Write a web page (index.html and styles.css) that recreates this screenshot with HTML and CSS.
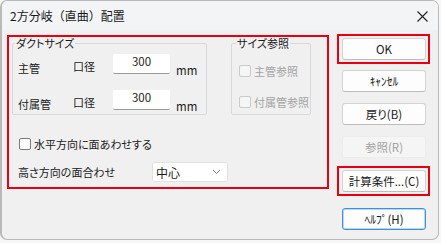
FILE: index.html
```html
<!DOCTYPE html>
<html lang="ja">
<head>
    <meta charset="UTF-8">
    <title>2方分岐（直曲）配置</title>
    <link rel="stylesheet" href="styles.css">
</head>
<body>
    <div class="window">
        <div class="titlebar">
            <span class="title">2方分岐（直曲）配置</span>
            <svg class="close" width="11" height="11" viewBox="0 0 11 11">
                <path d="M0.5 0.5 L10.5 10.5 M10.5 0.5 L0.5 10.5" stroke="#222" stroke-width="1.1" fill="none"/>
            </svg>
        </div>

        <div class="content">
            <div class="main-panel">
                <div class="groups">
                    <fieldset class="group group-duct">
                        <legend>ダクトサイズ</legend>
                        <div class="size-row">
                            <span class="pipe-label">主管</span>
                            <span class="dia-label">口径</span>
                            <div class="size-input">300</div>
                            <span class="unit">mm</span>
                        </div>
                        <div class="size-row second">
                            <span class="pipe-label">付属管</span>
                            <span class="dia-label">口径</span>
                            <div class="size-input">300</div>
                            <span class="unit">mm</span>
                        </div>
                    </fieldset>

                    <fieldset class="group group-ref">
                        <legend>サイズ参照</legend>
                        <div class="check disabled ref-first">
                            <span class="box"></span>
                            <span>主管参照</span>
                        </div>
                        <div class="check disabled ref-second">
                            <span class="box"></span>
                            <span>付属管参照</span>
                        </div>
                    </fieldset>
                </div>

                <div class="check horiz-row">
                    <span class="box"></span>
                    <span>水平方向に面あわせする</span>
                </div>

                <div class="align-row">
                    <span class="align-label">高さ方向の面合わせ</span>
                    <div class="combo">
                        <span>中心</span>
                        <svg width="9" height="6" viewBox="0 0 9 6">
                            <path d="M1 1 L4.5 4.5 L8 1" stroke="#777" stroke-width="1" fill="none"/>
                        </svg>
                    </div>
                </div>
            </div>

            <div class="buttons">
                <div class="btn-mark">
                    <div class="btn">OK</div>
                </div>
                <div class="btn btn-cancel">ｷｬﾝｾﾙ</div>
                <div class="btn btn-gap">戻り(B)</div>
                <div class="btn btn-gap btn-disabled">参照(R)</div>
                <div class="btn-mark btn-mark-calc">
                    <div class="btn">計算条件...(C)</div>
                </div>
                <div class="btn btn-help">ﾍﾙﾌﾟ(H)</div>
            </div>
        </div>
    </div>
</body>
</html>
```

FILE: styles.css
```css
body {
    margin: 0;
    background: #f7f7f7;
    font-family: "Noto Sans CJK JP", "Noto Sans", sans-serif;
    font-size: 11px;
    font-feature-settings: "palt";
    color: #1a1a1a;
}

.window {
    width: 436px;
    height: 238px;
    background: #f0f0f0;
    border: 1px solid #b9b9b9;
    border-left-width: 2px;
    border-radius: 7px;
    overflow: hidden;
}

.titlebar {
    height: 29px;
    background: #f3f4f6;
    display: flex;
    align-items: center;
    justify-content: space-between;
    padding: 0 10px 0 8px;
}

.title {
    font-size: 12px;
    line-height: 14px;
    margin-top: 1px;
    font-feature-settings: normal;
}

.close {
    margin-top: 1px;
}

.content {
    display: flex;
    align-items: flex-start;
    padding: 4px 0 0 5px;
}

/* red highlight frames */
.main-panel {
    width: 315px;
    height: 150px;
    margin-top: 1px;
    border: 2px solid #e60012;
    padding-left: 3px;
}

.groups {
    display: flex;
    align-items: flex-start;
}

.group {
    margin: 0;
    border: 1px solid #d8d8d8;
    border-radius: 2px;
    padding: 0;
    min-width: 0;
}

.group legend {
    padding: 0 1px;
    line-height: 12px;
}

.group-duct {
    width: 188px;
    height: 76px;
    padding-left: 5px;
}

.group-duct legend {
    margin-left: -3px;
}

.group-ref {
    width: 71px;
    height: 76px;
    margin-left: 24px;
    padding-left: 7px;
}

.group-ref legend {
    margin-left: -3px;
}

.size-row {
    display: flex;
    align-items: flex-start;
    margin-top: 5px;
}

.size-row.second {
    margin-top: 13px;
}

.pipe-label {
    width: 55px;
    line-height: 14px;
    margin-top: 7px;
}

.dia-label {
    width: 40px;
    line-height: 14px;
    margin-top: 5px;
}

.size-input {
    width: 57px;
    height: 19px;
    background: #fff;
    border-bottom: 1px solid #9a9a9a;
    border-radius: 2px;
    text-align: center;
    line-height: 15px;
    font-size: 11.5px;
}

.unit {
    margin-left: 6px;
    margin-top: 9px;
    line-height: 14px;
    font-size: 11.5px;
}

.check {
    display: flex;
    align-items: center;
    line-height: 14px;
}

.check .box {
    width: 10px;
    height: 10px;
    border: 1px solid #7a7a7a;
    border-radius: 2px;
    background: #fcfcfc;
    margin-right: 3px;
}

.check.disabled {
    color: #a3a3a3;
}

.check.disabled .box {
    border-color: #cacaca;
    background: #f5f5f5;
}

.ref-first {
    margin-top: 15px;
}

.ref-second {
    margin-top: 17px;
}

.horiz-row {
    margin: 22px 0 0 7px;
}

.align-row {
    display: flex;
    align-items: center;
    margin: 11px 0 0 6px;
}

.align-label {
    width: 134px;
    line-height: 14px;
}

.combo {
    width: 65px;
    height: 18px;
    background: #fff;
    border: 1px solid #e2e2e2;
    border-radius: 3px;
    display: flex;
    align-items: center;
    justify-content: space-between;
    padding: 0 6px 0 3px;
    font-size: 12px;
}

/* button column */
.buttons {
    margin-left: 8px;
    width: 93px;
}

.btn-mark {
    border: 2px solid #e60012;
    padding: 2px 3px;
    width: 83px;
}

.btn {
    width: 82px;
    height: 20px;
    background: #fdfdfd;
    border: 1px solid #d3d3d3;
    border-bottom-color: #bdbdbd;
    border-radius: 3px;
    text-align: center;
    line-height: 20px;
    font-size: 11.5px;
}

.buttons > .btn {
    margin-left: 5px;
}

.btn-cancel {
    margin-top: 6px;
}

.btn-gap {
    margin-top: 11px;
}

.btn-disabled {
    background: #f5f5f5;
    border-color: #ececec;
    color: #a3a3a3;
}

.btn-mark-calc {
    margin-top: 8px;
}

.btn-help {
    margin-top: 12px;
    border-color: #3d8fe0;
    box-shadow: inset 0 0 0 1px #b9d6f4;
}
```
